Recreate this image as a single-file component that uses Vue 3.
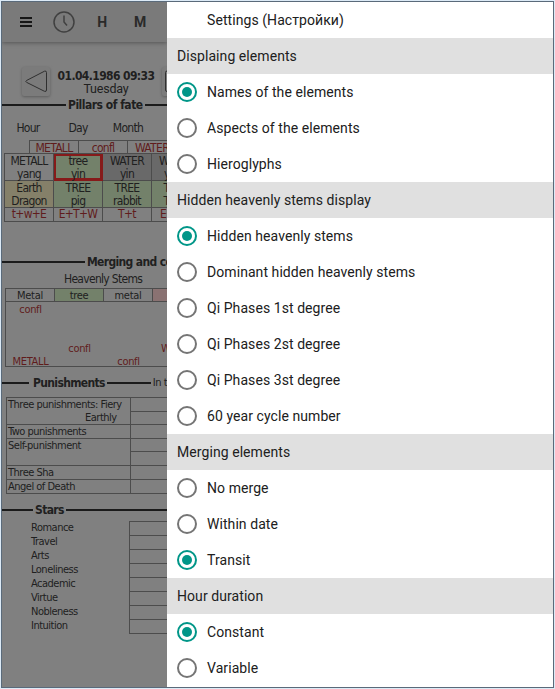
<script setup>
import { ref } from 'vue'

const groups = ref([
  { title: 'Displaing elements', selected: 0, options: ['Names of the elements', 'Aspects of the elements', 'Hieroglyphs'] },
  { title: 'Hidden heavenly stems display', selected: 0, options: ['Hidden heavenly stems', 'Dominant hidden heavenly stems', 'Qi Phases 1st degree', 'Qi Phases 2st degree', 'Qi Phases 3st degree', '60 year cycle number'] },
  { title: 'Merging elements', selected: 2, options: ['No merge', 'Within date', 'Transit'] },
  { title: 'Hour duration', selected: 0, options: ['Constant', 'Variable'] }
])
const heads = ['Hour', 'Day', 'Month', 'Year']
const merges = ['METALL', 'confl', 'WATER']
const stems = [
  { a: 'METALL', b: 'yang', tone: '' },
  { a: 'tree', b: 'yin', tone: 'green picked' },
  { a: 'WATER', b: 'yin', tone: 'dark' },
  { a: 'WATER', b: 'yang', tone: 'dark' }
]
const branches = [
  { a: 'Earth', b: 'Dragon', tone: 'sand' },
  { a: 'TREE', b: 'pig', tone: 'green' },
  { a: 'TREE', b: 'rabbit', tone: 'green' },
  { a: 'TREE', b: 'TREE', tone: 'green' }
]
const hidden = ['t+w+E', 'E+T+W', 'T+t', 'E+T+t']
const heavenly = [
  { name: 'Metal', tone: '', notes: ['confl', '', '', '', 'METALL'] },
  { name: 'tree', tone: 'green', notes: ['', '', '', 'confl', ''] },
  { name: 'metal', tone: '', notes: ['', '', '', '', 'confl'] },
  { name: '', tone: 'pink', notes: ['', '', '', 'WATER', ''] }
]
const stars = ['Romance', 'Travel', 'Arts', 'Loneliness', 'Academic', 'Virtue', 'Nobleness', 'Intuition']
</script>

<template>
  <div class="window">
    <main class="page">
      <header class="bar">
        <svg class="menu" viewBox="0 0 12 10"><path d="M0 1h12M0 5h12M0 9h12" /></svg>
        <svg class="clock" viewBox="0 0 22 22"><circle cx="11" cy="11" r="10" /><path d="M11 4.500V11l3 3.500" /></svg>
        <b class="hm">H</b>
        <b class="hm">M</b>
      </header>

      <div class="nav">
        <button class="step"><svg viewBox="0 0 28 29"><path d="M4.500 13.500 22.500 4.200Q24.500 3.500 24.500 5.500V23Q24.500 25 22.500 24.300L4.500 15.300Q3 14.400 4.500 13.500z" /></svg></button>
        <div class="when"><b>01.04.1986 09:33</b><span>Tuesday</span></div>
        <button class="step"><svg viewBox="0 0 28 29"><path d="M23.500 13.500 5.500 4.200Q3.500 3.500 3.500 5.500V23Q3.500 25 5.500 24.300L23.500 15.300Q25 14.400 23.500 13.500z" /></svg></button>
      </div>

      <div class="rule pillars"><i></i><b>Pillars of fate</b><i class="grow"></i></div>
      <div class="heads"><span v-for="h in heads" :key="h">{{ h }}</span></div>
      <div class="merges"><span v-for="m in merges" :key="m">{{ m }}</span></div>
      <div class="grid">
        <div v-for="(c, i) in stems" :key="'s' + i" class="cell two" :class="c.tone"><span>{{ c.a }}</span><span>{{ c.b }}</span></div>
        <div v-for="(c, i) in branches" :key="'b' + i" class="cell two" :class="c.tone"><span>{{ c.a }}</span><span>{{ c.b }}</span></div>
        <div v-for="h in hidden" :key="h" class="cell red">{{ h }}</div>
      </div>

      <div class="rule merging"><i></i><b>Merging and conflicts</b></div>
      <div class="subtitle">Heavenly Stems</div>
      <div class="heavenly">
        <div v-for="(h, k) in heavenly" :key="k" class="col">
          <div class="top" :class="h.tone">{{ h.name }}</div>
          <div v-for="(n, i) in h.notes" :key="i" class="note">{{ n }}</div>
        </div>
      </div>

      <div class="rule punish"><i></i><b>Punishments</b><i class="mid"></i><span>In the date</span></div>
      <div class="table">
        <div class="names">
          <div class="h27"><span>Three punishments: Fiery</span><span class="indent">Earthly</span></div>
          <div class="h14"><span>Two punishments</span></div>
          <div class="h27"><span>Self-punishment</span></div>
          <div class="h14"><span>Three Sha</span></div>
          <div class="h14"><span>Angel of Death</span></div>
        </div>
        <div class="values">
          <div class="h14"></div><div class="h13"></div><div class="h14"></div><div class="h13"></div>
          <div class="h14"></div><div class="h14"></div><div class="h14"></div>
        </div>
      </div>

      <div class="rule star-title"><i></i><b>Stars</b><i class="grow"></i></div>
      <div class="stars">
        <div v-for="s in stars" :key="s" class="star"><span>{{ s }}</span><div class="slot"></div></div>
      </div>
    </main>

    <aside class="drawer">
      <div class="row title">Settings (Настройки)</div>
      <template v-for="g in groups" :key="g.title">
        <div class="row group">{{ g.title }}</div>
        <div v-for="(o, i) in g.options" :key="o" class="row option" @click="g.selected = i">
          <svg class="radio" :class="{ on: g.selected === i }" viewBox="0 0 20 20">
            <circle class="ring" cx="10" cy="10" r="9" />
            <circle v-if="g.selected === i" class="dot" cx="10" cy="10" r="5" />
          </svg>
          <span>{{ o }}</span>
        </div>
      </template>
    </aside>
  </div>
</template>

<style>
body { background: #dceaf6; }
</style>

<style scoped>
* { box-sizing: border-box; }
.window { margin: 1px; width: 553px; height: 687px; border: 1px solid #5a6a7a; display: flex; overflow: hidden; background: #fff; }
.page { width: 165px; height: 685px; flex: none; overflow: hidden; background: #808080; color: #202020; font: 11px/14px "DejaVu Sans Condensed", "DejaVu Sans", sans-serif; font-stretch: condensed; letter-spacing: -0.5px; white-space: nowrap; }
.bar { height: 40px; background: #7a7a7a; box-shadow: 0 1px 4px #555; display: flex; align-items: center; padding-left: 18px; }
.menu { width: 12px; height: 10px; stroke: #161616; stroke-width: 2; }
.clock { width: 22px; height: 22px; margin-left: 21px; fill: none; stroke: #404040; stroke-width: 1.5; }
.hm { font: bold 14px Roboto, sans-serif; width: 38px; text-align: center; color: #2a2a2a; margin-left: 8px; }
.hm + .hm { margin-left: 0; }
.nav { width: 250px; margin-top: 25px; height: 29px; padding-left: 20px; display: flex; }
.step { width: 28px; height: 29px; flex: none; padding: 0; border: 0; border-radius: 2px; background: #7b7b7b; box-shadow: 0 1px 3px #5c5c5c; }
.step svg { display: block; width: 28px; height: 29px; fill: none; stroke: #303030; stroke-width: 1; }
.when { width: 112px; display: flex; flex-direction: column; align-items: center; padding-top: 2px; }
.when b { font-size: 12px; line-height: 14px; letter-spacing: -0.6px; }
.when span { font: 12.5px/12px Roboto, sans-serif; letter-spacing: -.2px; }
.rule { display: flex; align-items: center; height: 14px; }
.rule i { height: 2px; background: #1b1b1b; flex: none; }
.rule b { font-size: 12px; letter-spacing: -0.65px; }
.rule .grow { flex: 1; }
.pillars { margin-top: 2px; }
.pillars i:first-child { width: 64px; margin-right: 2px; }
.pillars b { letter-spacing: -0.5px; }
.pillars .grow { margin-left: 2px; }
.heads { width: 200px; margin: 9px 0 0 1px; display: grid; grid-template-columns: repeat(4, 50px); text-align: center; }
.heads, .merges, .grid, .subtitle { font-size: 12px; letter-spacing: -0.7px; }
.merges { margin: 5px 0 0 27px; width: 148px; height: 13px; display: grid; grid-template-columns: repeat(3, 49px); border-left: 1px solid #4c4c4c; color: #601c1c; text-align: center; }
.merges span { border-top: 1px solid #4c4c4c; border-right: 1px solid #4c4c4c; }
.grid { width: 197px; margin-left: 2px; display: grid; grid-template: 27px 27px 14px / repeat(4, 49px); border: 1px solid #4c4c4c; border-width: 1px 0 0 1px; text-align: center; }
.cell { border: 1px solid #4c4c4c; border-width: 0 1px 1px 0; line-height: 13px; }
.two { display: flex; flex-direction: column; }
.two span { line-height: 14px; height: 13px; }
.two span + span { line-height: 15px; }
.green { background: #73816a; }
.dark { background: #696969; }
.sand { background: #858069; }
.pink { background: #8a7272; }
.picked { box-shadow: inset 0 0 0 2px #861a1a; border-color: #861a1a; }
.red { color: #601c1c; }
.merging { margin-top: 33px; }
.merging i { width: 83px; margin-right: 2px; }
.subtitle { margin-top: 3px; padding-left: 62px; }
.heavenly { margin: 2px 0 0 3px; width: 197px; height: 79px; display: flex; border: 1px solid #4c4c4c; letter-spacing: -0.3px; }
.col { width: 49px; flex: none; text-align: center; }
.top { height: 13px; line-height: 13px; border: 1px solid #4c4c4c; border-width: 0 1px 1px 0; }
.note { height: 13px; line-height: 15px; color: #601c1c; }
.punish { margin-top: 9px; }
.punish i:first-child { width: 27px; margin-right: 4px; }
.punish .mid { width: 44px; margin: 0 2px; }
.table { margin: 7px 0 0 4px; width: 250px; display: flex; border: 1px solid #4c4c4c; border-width: 1px 0 0 1px; }
.names { width: 124px; flex: none; border-right: 1px solid #4c4c4c; }
.values { flex: 1; }
.names > div, .values > div { border-bottom: 1px solid #4c4c4c; }
.names span { display: block; padding-left: 1px; height: 13px; line-height: 13px; }
.names .indent { padding-left: 78px; }
.h27 { height: 27px; }
.h14 { height: 14px; }
.h13 { height: 13px; }
.star-title { margin-top: 9px; }
.star-title i:first-child { width: 31px; margin-right: 2px; }
.star-title .grow { margin-left: 2px; }
.stars { margin: 4px 0 0 29px; width: 200px; }
.star { display: flex; height: 14px; }
.star span { width: 98px; }
.slot { flex: 1; border: 1px solid #4c4c4c; border-bottom: 0; }
.star:last-child .slot { height: 15px; border-bottom: 1px solid #4c4c4c; }
.drawer { flex: 1; background: #fff; color: #202020; font: 14px/36px Roboto, sans-serif; letter-spacing: .07px; white-space: nowrap; }
.row { height: 36px; padding-left: 10px; }
.title { padding-left: 40px; }
.group { background: #e0e0e0; }
.option { display: flex; align-items: center; }
.radio { width: 20px; height: 20px; margin-right: 10px; }
.ring { fill: none; stroke: #757575; stroke-width: 2; }
.on .ring { stroke: #009688; }
.dot { fill: #009688; }
</style>
